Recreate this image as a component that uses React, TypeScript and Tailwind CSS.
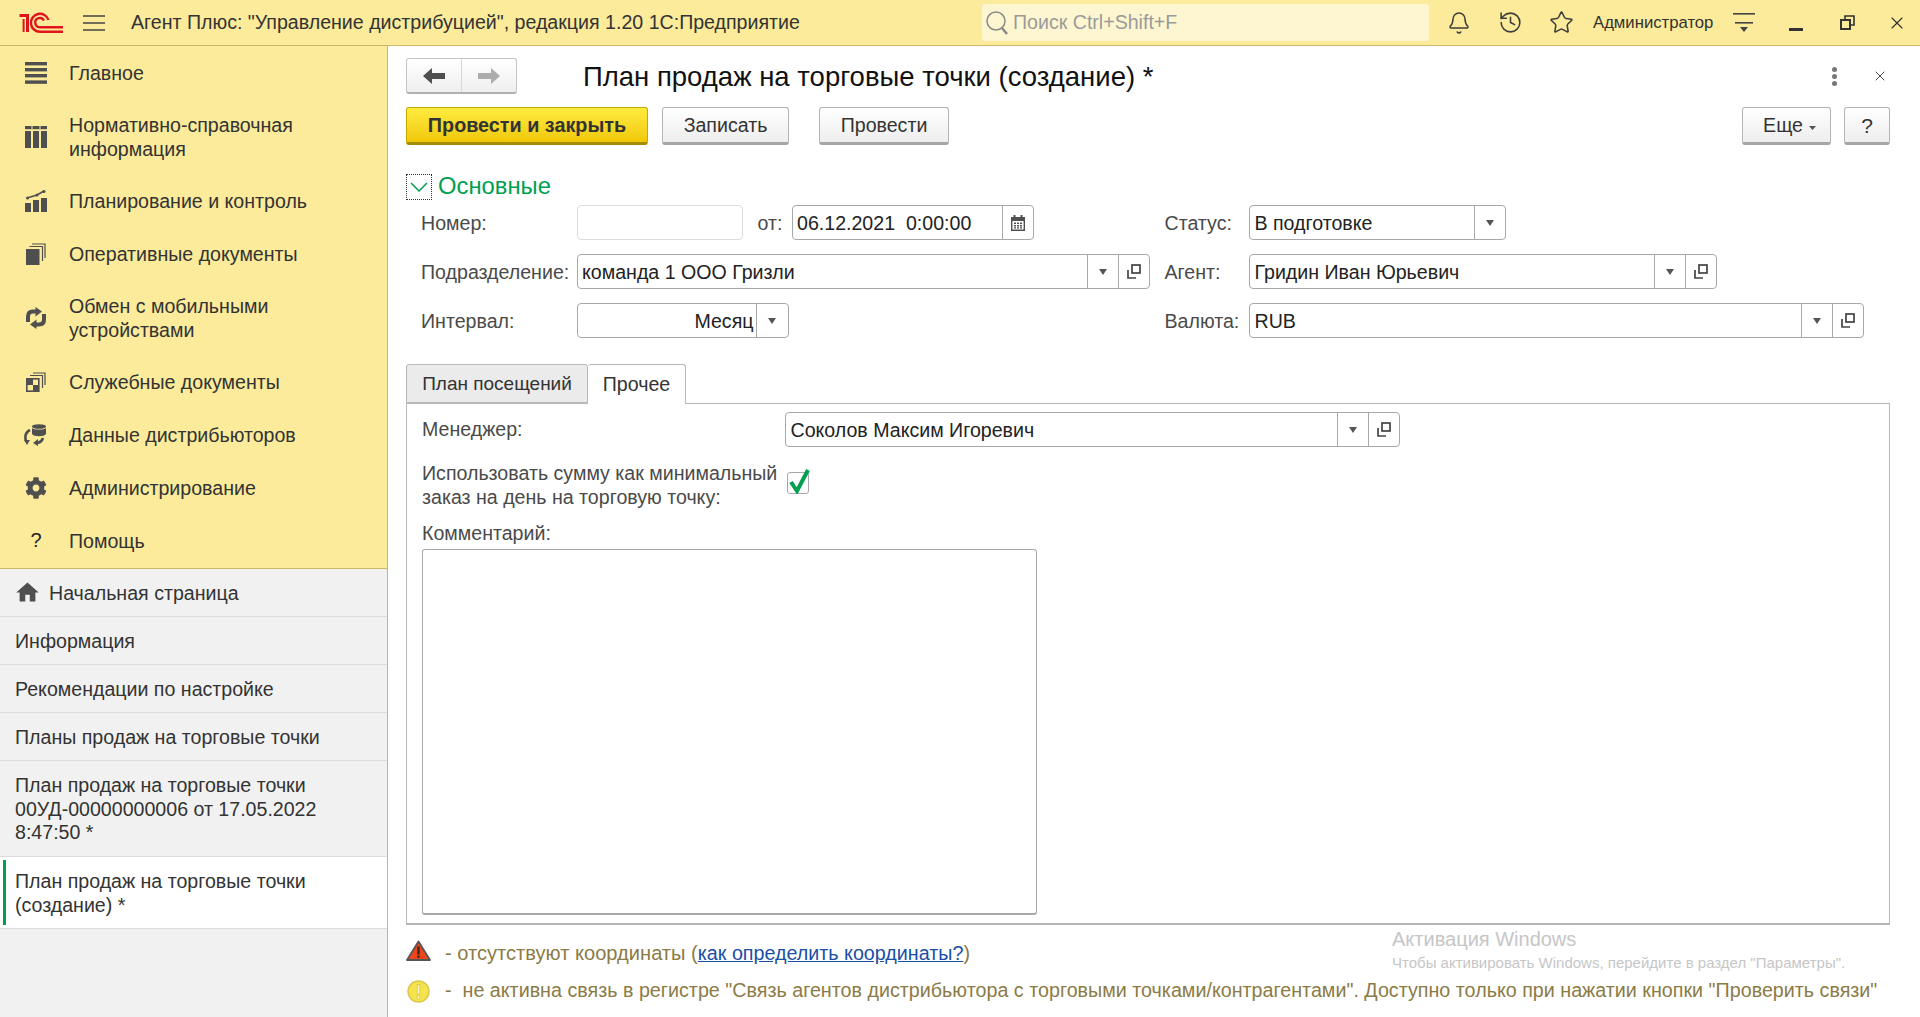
import React from "react";
import { Bell, History, Star, X } from "lucide-react";
import { FaCog } from "react-icons/fa";
import { MdHome } from "react-icons/md";

const G = "#4f4f4f";

const Logo = () => (
  <svg width="45" height="22" viewBox="0 0 45 22" fill="none" stroke="#e0141c" strokeWidth="2.4">
    <path d="M0.5 3.5 H8.5 V20" strokeWidth="3" />
    <path d="M4.6 7 V20" strokeWidth="2" />
    <path d="M44 19.8 H21 A9 9 0 1 1 29.5 8" />
    <path d="M44 15.2 H21 A4.6 4.6 0 1 1 25 8.6" />
  </svg>
);

const Burger = () => (
  <svg width="22" height="18" viewBox="0 0 22 18" fill="none" stroke="#444" strokeWidth="1.6">
    <path d="M0 2 H22 M0 9 H22 M0 16 H22" />
  </svg>
);

const IconMain = () => (
  <svg width="22" height="22" viewBox="0 0 22 22" fill={G}>
    <rect x="0" y="0" width="22" height="3.4" />
    <rect x="0" y="6" width="22" height="3.4" />
    <rect x="0" y="12" width="22" height="3.4" />
    <rect x="0" y="18.4" width="22" height="3.4" />
  </svg>
);
const IconTable = () => (
  <svg width="22" height="22" viewBox="0 0 22 22" fill={G}>
    <rect x="0" y="0" width="22" height="3.2" />
    <rect x="0" y="5" width="6" height="17" />
    <rect x="8" y="5" width="6" height="17" />
    <rect x="16" y="5" width="6" height="17" />
    <rect x="6.5" y="0" width="1" height="3.2" fill="#fbeb9b" />
    <rect x="14.5" y="0" width="1" height="3.2" fill="#fbeb9b" />
  </svg>
);
const IconChart = () => (
  <svg width="22" height="22" viewBox="0 0 22 22" fill={G}>
    <rect x="0" y="13" width="6" height="9" />
    <rect x="8" y="10" width="6" height="12" />
    <rect x="16" y="8" width="6" height="14" />
    <path d="M2 8 L12 5 L19 1" stroke={G} strokeWidth="1.6" fill="none" />
    <circle cx="2.5" cy="8" r="1.5" />
    <circle cx="12" cy="5" r="1.5" />
    <circle cx="19" cy="1.6" r="1.5" />
  </svg>
);
const IconDocs = () => (
  <svg width="20" height="22" viewBox="0 0 20 22" fill="none" stroke={G} strokeWidth="1.2">
    <path d="M6 1 H19 V15" />
    <path d="M3.5 3.5 H16.5 V18" />
    <rect x="0" y="6" width="13.5" height="16" fill={G} stroke="none" />
  </svg>
);
const IconSync = () => (
  <svg width="22" height="22" viewBox="0 0 22 22" fill="none" stroke={G} strokeWidth="4">
    <path d="M3 15 V9.5 Q3 4.5 8 4.5 H11" />
    <path d="M10.5 0 L17 4.5 L10.5 9.5 Z" fill={G} stroke="none" />
    <path d="M19 7 V12.5 Q19 17.5 14 17.5 H11" />
    <path d="M11.5 12.5 L5 17.5 L11.5 22 Z" fill={G} stroke="none" />
  </svg>
);
const IconService = () => (
  <svg width="20" height="20" viewBox="0 0 20 20" fill="none" stroke={G} strokeWidth="1.2">
    <path d="M7 1 H19 V13" />
    <path d="M4 3.5 H16.5 V16" />
    <rect x="0.8" y="6.8" width="12" height="12.4" fill="#fbeb9b" stroke={G} strokeWidth="1.6" />
    <rect x="1" y="7" width="6" height="6" fill={G} stroke="none" />
    <rect x="7" y="13" width="6" height="6" fill={G} stroke="none" />
  </svg>
);
const IconData = () => (
  <svg width="24" height="22" viewBox="0 0 24 22" fill={G}>
    <ellipse cx="15" cy="2.5" rx="7" ry="2.3" />
    <path d="M8 4 C10 6 20 6 22 4 V10 C20 13 10 13 8 10 Z" />
    <path d="M6 6 C2 8 0.5 12 2 17" stroke={G} strokeWidth="2.6" fill="none" />
    <path d="M0 16 H6 L3 21 Z" />
    <path d="M19 14 C18 17 15 19 12 19" stroke={G} strokeWidth="2.6" fill="none" />
    <path d="M14 15 V22 L9 19 Z" />
  </svg>
);

const menu: { icon: React.ReactNode; lines: string[] }[] = [
  { icon: <IconMain />, lines: ["Главное"] },
  { icon: <IconTable />, lines: ["Нормативно-справочная", "информация"] },
  { icon: <IconChart />, lines: ["Планирование и контроль"] },
  { icon: <IconDocs />, lines: ["Оперативные документы"] },
  { icon: <IconSync />, lines: ["Обмен с мобильными", "устройствами"] },
  { icon: <IconService />, lines: ["Служебные документы"] },
  { icon: <IconData />, lines: ["Данные дистрибьюторов"] },
  { icon: <FaCog size={22} color={G} />, lines: ["Администрирование"] },
  { icon: <span className="text-[20px] text-[#222]">?</span>, lines: ["Помощь"] },
];

const Caret = () => (
  <svg width="8" height="6" viewBox="0 0 8 6" fill="#555">
    <path d="M0 0 H8 L4 6 Z" />
  </svg>
);

const Open = () => (
  <svg width="14" height="15" viewBox="0 0 14 15" fill="none" stroke="#444" strokeWidth="1.7">
    <rect x="5" y="1" width="8" height="8" />
    <path d="M1 6 V14 H9" />
  </svg>
);

const Calendar = () => (
  <svg width="14" height="16" viewBox="0 0 14 16" fill={G}>
    <rect x="2.5" y="0" width="2" height="3" />
    <rect x="9.5" y="0" width="2" height="3" />
    <path d="M0 2 H14 V16 H0 Z M1.4 6 V14.6 H12.6 V6 Z" fillRule="evenodd" />
    <path d="M3 7.5 H5 V9 H3 Z M6 7.5 H8 V9 H6 Z M9 7.5 H11 V9 H9 Z M3 10 H5 V11.5 H3 Z M6 10 H8 V11.5 H6 Z M9 10 H11 V11.5 H9 Z M3 12.3 H5 V13.6 H3 Z M6 12.3 H8 V13.6 H6 Z M9 12.3 H11 V13.6 H9 Z" />
  </svg>
);

const Cell = ({ w, children }: { w: string; children: React.ReactNode }) => (
  <div className={`${w} h-full shrink-0 flex items-center justify-center border-l border-[#a8a8a8]`}>{children}</div>
);

const Field = ({
  w,
  value,
  caret,
  open,
  cal,
  right,
}: {
  w: string;
  value: string;
  caret?: string;
  open?: boolean;
  cal?: boolean;
  right?: boolean;
}) => (
  <div className={`${w} h-[35px] shrink-0 flex bg-white border border-[#a8a8a8] rounded-[4px] text-[#222]`}>
    <div className={`flex-1 min-w-0 flex items-center pl-[4.5px] pt-[2px] whitespace-pre ${right ? "justify-end pr-[2px]" : "pr-[5px]"}`}>{value}</div>
    {cal && (
      <Cell w="w-[31px]">
        <Calendar />
      </Cell>
    )}
    {caret && (
      <Cell w={caret}>
        <Caret />
      </Cell>
    )}
    {open && (
      <Cell w="w-[31px]">
        <Open />
      </Cell>
    )}
  </div>
);

const Label = ({ w, children }: { w: string; children: React.ReactNode }) => (
  <div className={`${w} shrink-0 pt-[2px] text-[#4a4a4a]`}>{children}</div>
);

const Btn = ({ w, ml, children }: { w: string; ml?: string; children: React.ReactNode }) => (
  <button
    className={`${w} ${ml ?? ""} h-[38px] shrink-0 flex items-center justify-center pt-[2px] rounded-[3px] border border-[#b4b4b4] border-b-[3px] border-b-[#a6a6a6] bg-gradient-to-b from-white to-[#eeeeee] text-[#333]`}
  >
    {children}
  </button>
);

export default function App() {
  return (
    <div className="w-[1920px] h-[1017px] overflow-hidden flex flex-col bg-white font-['Liberation_Sans',Arial,sans-serif] text-[19.6px] leading-[23.5px]">
      {/* Top bar */}
      <header className="h-[46px] shrink-0 flex items-center bg-[#fbeb9b] border-b border-[#c9b968]">
        <div className="ml-[19px] w-[45px] flex">
          <Logo />
        </div>
        <div className="ml-[19px] flex">
          <Burger />
        </div>
        <div className="ml-[26px] w-[746px] pt-[1px] text-[#333] whitespace-nowrap">Агент Плюс: "Управление дистрибуцией", редакция 1.20 1С:Предприятие</div>
        <div className="ml-[105px] w-[447px] h-[37px] flex items-center rounded-[3px] bg-[#fdf6d0]">
          <svg className="ml-[3px]" width="24" height="26" viewBox="0 0 24 26" fill="none" stroke="#8a8a8a">
            <circle cx="11" cy="11" r="9" strokeWidth="1.5" />
            <path d="M17 18 L22 24" strokeWidth="2.6" />
          </svg>
          <span className="ml-[4px] pt-[1px] text-[#9b9b9b]">Поиск Ctrl+Shift+F</span>
        </div>
        <Bell className="ml-[18px]" size={24} strokeWidth={1.5} color="#3d3d3d" />
        <History className="ml-[27px]" size={25} strokeWidth={1.5} color="#3d3d3d" />
        <Star className="ml-[26px]" size={25} strokeWidth={1.5} color="#3d3d3d" />
        <div className="ml-[19px] w-[121px] text-[16.7px] text-[#333] whitespace-nowrap">Администратор</div>
        <svg className="ml-[19px]" width="22" height="20" viewBox="0 0 22 20" fill="#444" stroke="none">
          <rect x="0" y="0" width="22" height="1.6" />
          <rect x="2" y="9" width="18" height="1.6" />
          <path d="M7 14 H15 L11 19 Z" />
        </svg>
        <div className="ml-[34px] mt-[14px] w-[14px] h-[3px] bg-[#333]" />
        <svg className="ml-[37px]" width="15" height="15" viewBox="0 0 15 15" fill="none" stroke="#333" strokeWidth="2">
          <rect x="1" y="5" width="9" height="9" />
          <path d="M5 5 V1 H14 V10 H10" strokeWidth="1.6" />
        </svg>
        <X className="ml-[32px]" size={20} strokeWidth={1.4} color="#333" />
      </header>

      <div className="flex-1 flex min-h-0">
        {/* Sidebar */}
        <aside className="w-[388px] shrink-0 flex flex-col border-r border-[#c9b968] bg-[#f1f1f1] text-[#333]">
          <nav className="h-[523px] shrink-0 bg-[#fbeb9b] border-b border-[#c9b968]">
            {menu.map((m) => (
              <div key={m.lines[0]} className={`flex items-center ${m.lines.length > 1 ? "h-[75px]" : "h-[53px]"}`}>
                <div className="ml-[24px] w-[24px] shrink-0 flex items-center justify-center">{m.icon}</div>
                <div className="ml-[21px] pt-[2px]">
                  {m.lines.map((l) => (
                    <div key={l}>{l}</div>
                  ))}
                </div>
              </div>
            ))}
          </nav>
          <div className="h-[48px] flex items-center pl-[15px] pt-[2px] border-b-[1.5px] border-[#dcdcdc]">
            <MdHome size={27} color={G} className="-ml-[1px] -mt-[2px]" />
            <span className="ml-[8px]">Начальная страница</span>
          </div>
          <div className="h-[48px] flex items-center pl-[15px] pt-[2px] border-b-[1.5px] border-[#dcdcdc]">Информация</div>
          <div className="h-[48px] flex items-center pl-[15px] pt-[2px] border-b-[1.5px] border-[#dcdcdc]">Рекомендации по настройке</div>
          <div className="h-[48px] flex items-center pl-[15px] pt-[2px] border-b-[1.5px] border-[#dcdcdc]">Планы продаж на торговые точки</div>
          <div className="h-[96px] flex items-center pl-[15px] pt-[2px] border-b-[1.5px] border-[#dcdcdc]">
            <div>
              <div>План продаж на торговые точки</div>
              <div>00УД-00000000006 от 17.05.2022</div>
              <div>8:47:50 *</div>
            </div>
          </div>
          <div className="h-[72px] flex items-center bg-white border-b-[1.5px] border-[#dcdcdc]">
            <div className="ml-[3px] w-[3px] h-[65px] bg-[#00a050]" />
            <div className="ml-[9px] pt-[2px]">
              <div>План продаж на торговые точки</div>
              <div>(создание) *</div>
            </div>
          </div>
        </aside>

        {/* Main */}
        <main className="relative flex-1 min-w-0 pl-[18px] pr-[30px] pt-[12px] text-[#333]">
          <div className="flex items-center h-[36px]">
            <div className="w-[111px] h-[36px] flex rounded-[3px] border border-[#c4c4c4] border-b-[2.5px] border-b-[#b0b0b0] bg-gradient-to-b from-white to-[#efefef]">
              <div className="w-[55px] flex items-center justify-center border-r border-[#d8d8d8]">
                <svg width="22" height="16" viewBox="0 0 22 16" fill="#4f4f4f">
                  <path d="M0 8 L9 0 V5 H22 V11 H9 V16 Z" />
                </svg>
              </div>
              <div className="flex-1 flex items-center justify-center">
                <svg width="22" height="16" viewBox="0 0 22 16" fill="#adadad">
                  <path d="M22 8 L13 0 V5 H0 V11 H13 V16 Z" />
                </svg>
              </div>
            </div>
            <h1 className="ml-[66px] pt-[1px] text-[27.5px] leading-[36px] text-[#111] whitespace-nowrap">План продаж на торговые точки (создание) *</h1>
            <div className="ml-auto flex flex-col gap-[2px]">
              <div className="w-[5px] h-[5px] rounded-full bg-[#777]" />
              <div className="w-[5px] h-[5px] rounded-full bg-[#777]" />
              <div className="w-[5px] h-[5px] rounded-full bg-[#777]" />
            </div>
            <X className="ml-[35px] mr-[2px]" size={16} strokeWidth={1.5} color="#444" />
          </div>

          <div className="flex mt-[13px]">
            <button className="w-[242px] h-[38px] shrink-0 flex items-center justify-center pt-[2px] rounded-[3px] border border-[#c9a800] border-b-[3px] border-b-[#a68c00] bg-gradient-to-b from-[#ffec3d] to-[#f0c800] font-bold text-[19.8px] text-[#333]">
              Провести и закрыть
            </button>
            <Btn w="w-[127px]" ml="ml-[14px]">Записать</Btn>
            <Btn w="w-[130px]" ml="ml-[30px]">Провести</Btn>
            <Btn w="w-[89px]" ml="ml-auto">
              <span className="ml-[6px]">Еще</span>
              <svg className="ml-[6px] mt-[3px]" width="7" height="4" viewBox="0 0 7 4" fill="#555">
                <path d="M0 0 H7 L3.5 4 Z" />
              </svg>
            </Btn>
            <Btn w="w-[46px]" ml="ml-[13px]">
              <span className="text-[21px]">?</span>
            </Btn>
          </div>

          <div className="flex items-center mt-[29px] h-[26px]">
            <div className="w-[26px] h-[26px] flex items-center justify-center border border-dotted border-[#333]">
              <svg width="18" height="10" viewBox="0 0 18 10" fill="none" stroke="#00a050" strokeWidth="1.5">
                <path d="M1 1 L9 9 L17 1" />
              </svg>
            </div>
            <span className="ml-[6px] -mt-[3px] text-[23.8px] text-[#00a050]">Основные</span>
          </div>

          <div className="flex items-center mt-[5px] pl-[15px]">
            <Label w="w-[155.5px]">Номер:</Label>
            <div className="w-[166px] h-[35px] shrink-0 rounded-[4px] border border-[#dcdcdc]" />
            <div className="ml-[15px] w-[34px] shrink-0 pt-[2px] text-[#4a4a4a]">от:</div>
            <Field w="w-[242px]" value="06.12.2021  0:00:00" cal />
            <div className="ml-[131px] w-[84.5px] shrink-0 pt-[2px] text-[#4a4a4a]">Статус:</div>
            <Field w="w-[257px]" value="В подготовке" caret="w-[31px]" />
          </div>

          <div className="flex items-center mt-[14px] pl-[15px]">
            <Label w="w-[155.5px]">Подразделение:</Label>
            <Field w="w-[573px]" value="команда 1 ООО Гризли" caret="w-[31px]" open />
            <div className="ml-[15px] w-[84.5px] shrink-0 pt-[2px] text-[#4a4a4a]">Агент:</div>
            <Field w="w-[468px]" value="Гридин Иван Юрьевич" caret="w-[31px]" open />
          </div>

          <div className="flex items-center mt-[14px] pl-[15px]">
            <Label w="w-[155.5px]">Интервал:</Label>
            <Field w="w-[212px]" value="Месяц" caret="w-[32px]" right />
            <div className="ml-[376px] w-[84.5px] shrink-0 pt-[2px] text-[#4a4a4a]">Валюта:</div>
            <Field w="w-[615px]" value="RUB" caret="w-[31px]" open />
          </div>

          <div className="relative z-10 flex mt-[26px] h-[40px] -mb-[1px]">
            <div className="w-[182px] h-[39px] flex items-center justify-center pt-[1px] bg-[#ebebeb] border border-[#b8b8b8] rounded-t-[3px] text-[19px] text-[#333]">План посещений</div>
            <div className="w-[98px] h-[40px] flex items-center justify-center pt-[1px] bg-white border border-b-0 border-l-0 border-[#b8b8b8] rounded-t-[3px] text-[#333]">Прочее</div>
          </div>

          <section className="h-[522px] border border-[#b8b8b8] border-b-2 pl-[15px] pt-[8px]">
            <div className="flex items-center">
              <div className="w-[363px] shrink-0 pt-[1px] text-[#4a4a4a]">Менеджер:</div>
              <Field w="w-[615px]" value="Соколов Максим Игоревич" caret="w-[31px]" open />
            </div>
            <div className="flex mt-[15px]">
              <div className="w-[365px] shrink-0 text-[#4a4a4a] whitespace-nowrap">
                <div>Использовать сумму как минимальный</div>
                <div>заказ на день на торговую точку:</div>
              </div>
              <div className="relative mt-[10px] w-[22px] h-[22px] shrink-0 rounded-[3px] border border-[#a8a8a8] bg-white">
                <svg className="absolute left-[0px] -top-[5px]" width="22" height="26" viewBox="0 0 22 26" fill="none" stroke="#00a050" strokeWidth="4">
                  <path d="M3 14 L9 23 L20 2" />
                </svg>
              </div>
            </div>
            <div className="mt-[13px] text-[#4a4a4a]">Комментарий:</div>
            <div className="mt-[3px] w-[615px] h-[366px] rounded-[3px] border border-[#a8a8a8] border-b-2" />
          </section>

          <div className="flex items-center mt-[17px] h-[24px] text-[19.72px]">
            <svg className="shrink-0 -mt-[6px]" width="25" height="22" viewBox="0 0 25 22">
              <path d="M12.5 1.5 L24 20 H1 Z" fill="#f0441c" stroke="#555" strokeWidth="1.8" strokeLinejoin="round" />
              <rect x="11.3" y="6.5" width="2.4" height="8" fill="#3a2a20" />
              <rect x="11.3" y="15.5" width="2.4" height="2.4" fill="#3a2a20" />
            </svg>
            <span className="ml-[14px] text-[20.1px] text-[#8b7b45] whitespace-pre">- отсутствуют координаты (</span>
            <span className="text-[#1a4fa5] underline">как определить координаты?</span>
            <span className="text-[#8b7b45]">)</span>
          </div>
          <div className="flex items-center mt-[13px] h-[24px] text-[19.72px]">
            <svg className="shrink-0" width="25" height="23" viewBox="0 0 25 23">
              <circle cx="12.5" cy="11.5" r="10.5" fill="#f6e24a" stroke="#d8c850" strokeWidth="1.4" />
              <rect x="11.2" y="4.5" width="2.6" height="10" fill="#fff8c8" stroke="#c9b840" strokeWidth="0.6" />
              <circle cx="12.5" cy="17.5" r="1.6" fill="#fff8c8" stroke="#c9b840" strokeWidth="0.6" />
            </svg>
            <span className="ml-[14px] text-[#8b7b45] whitespace-pre">-  не активна связь в регистре "Связь агентов дистрибьютора с торговыми точками/контрагентами". Доступно только при нажатии кнопки "Проверить связи"</span>
          </div>

          <div className="absolute left-[1004px] top-[881px] pointer-events-none whitespace-nowrap text-[#c6c6c6]">
            <div className="text-[20px] leading-[24px]">Активация Windows</div>
            <div className="mt-[3px] text-[15px] leading-[18px]">Чтобы активировать Windows, перейдите в раздел "Параметры".</div>
          </div>
        </main>
      </div>
    </div>
  );
}
